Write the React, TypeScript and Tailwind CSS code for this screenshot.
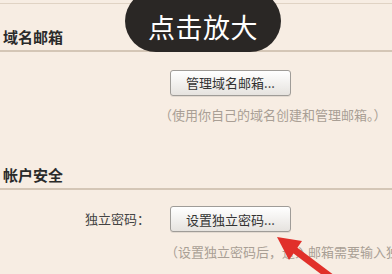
import React from 'react';

const font = { fontFamily: '"Noto Sans CJK SC", "Liberation Sans", sans-serif' };

const Btn: React.FC<{ label: string }> = ({ label }) => (
  <button className="w-[121px] h-[26px] rounded-[3px] border border-[#9f9c98] bg-gradient-to-b from-[#ffffff] to-[#e6e3df] text-[13px] leading-none text-[#333] shadow-[0_1px_0_rgba(0,0,0,0.08)]">
    {label}
  </button>
);

export default function App() {
  return (
    <div className="relative w-[392px] h-[274px] overflow-hidden bg-[#f7ede3]" style={font}>
      <div className="h-[4px] border-b border-[#e0d3c4]" />

      {/* 域名邮箱 */}
      <div className="h-[48px] pt-[25px] pl-[3px] border-b-2 border-[#d4c6b6]">
        <div className="text-[15px] leading-[15px] font-bold text-[#2a2a2a]">域名邮箱</div>
      </div>
      <div className="pl-[170px] pt-[17px]">
        <Btn label="管理域名邮箱..." />
      </div>
      <div className="pl-[159px] pt-[11px] text-[13px] leading-[16px] text-[#a99f95] whitespace-nowrap">
        （使用你自己的域名创建和管理邮箱。）
      </div>

      {/* 帐户安全 */}
      <div className="h-[67px] pt-[44px] pl-[3px] border-b-2 border-[#d4c6b6]">
        <div className="text-[15px] leading-[15px] font-bold text-[#2a2a2a]">帐户安全</div>
      </div>
      <div className="flex items-center pt-[16px]">
        <div className="w-[153px] pr-[3px] text-right text-[13px] text-[#444]">独立密码：</div>
        <div className="pl-[17px]">
          <Btn label="设置独立密码..." />
        </div>
      </div>
      <div className="pl-[165px] pt-[12px] text-[13px] leading-[16px] text-[#a99f95] whitespace-nowrap">
        （设置独立密码后，进入邮箱需要输入独立密码）
      </div>

      {/* overlay pill */}
      <div className="absolute left-[125px] top-[-10px] w-[156px] h-[62px] rounded-full bg-[#2a2725] flex items-center justify-center pt-[10px]">
        <span className="text-[27px] leading-none text-white tracking-[0.5px]">点击放大</span>
      </div>

      {/* red arrow */}
      <svg className="absolute left-0 top-0" width="392" height="274" viewBox="0 0 392 274">
        <line x1="340" y1="284" x2="292" y2="248" stroke="#e1302a" strokeWidth="7" />
        <polygon points="277,237 302,241 289,260" fill="#e1302a" />
      </svg>
    </div>
  );
}
